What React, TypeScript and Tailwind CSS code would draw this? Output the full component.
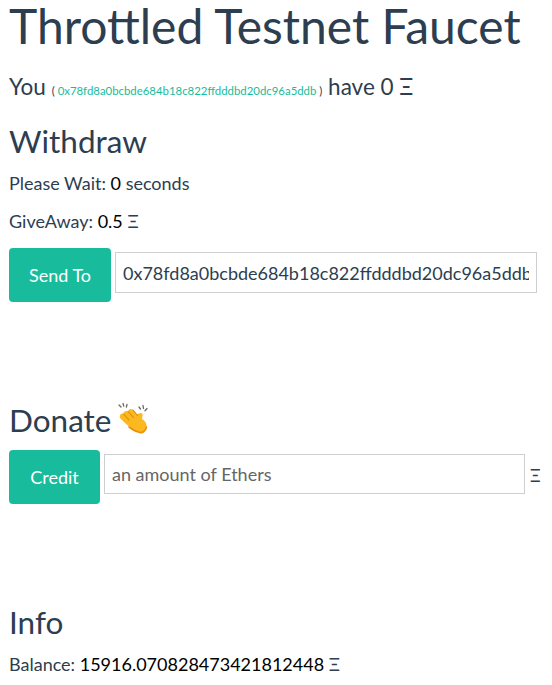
const ether = "\u039E";

function Clap() {
  return (
    <svg viewBox="0 0 36 36" className="h-[36px] w-[36px] shrink-0">
      <g stroke="#6f6a5c" strokeWidth="1.3" strokeLinecap="round">
        <path d="M3 3 L5 5" />
        <path d="M7 1.5 L7.8 4.2" />
        <path d="M11 2.5 L10.4 5" />
        <path d="M23 5 L24.5 7" />
        <path d="M27 3.5 L27.5 6.5" />
        <path d="M31 6.5 L29 8.8" />
      </g>
      <path
        d="M4 14 C4 12 6 11 7.5 12 C7.5 9.5 10 8 12 9.5 C12.5 7 15 6 17 8 L21 12.5 C22.5 11 25 10 26.5 12 C27 13.5 26 15 26 17 C28.5 18.5 31 21 30.5 25 C30 29 26 32 22.5 30 C17 28 11 23 8 20 L5 17 C3.5 16 3.5 15 4 14 Z"
        fill="#fbb91f"
      />
      <path
        d="M7.5 12 L13 18 M12 9.5 L17.5 15.5 M17 8 L21.5 13.5"
        stroke="#d98a10"
        strokeWidth="1.1"
        strokeLinecap="round"
        fill="none"
      />
      <path d="M13 25 C17 28 20 29.5 22.5 30 C26 32 30 29 30.5 25" stroke="#e8920c" strokeWidth="1.6" fill="none" strokeLinecap="round" />
    </svg>
  );
}

export default function App() {
  return (
    <div className="h-[685px] bg-white px-[9px] font-['Lato','Liberation_Sans',sans-serif] text-[#2c3e50]">
      {/* Header */}
      <h1 className="text-[48px] font-normal leading-[52px]">Throttled Testnet Faucet</h1>
      <p className="mt-[17px] text-[22.5px] leading-[36px] whitespace-nowrap">
        You{" "}
        <span className="text-[11.4px]">
          ( <a className="text-[#18bc9c]">0x78fd8a0bcbde684b18c822ffdddbd20dc96a5ddb</a> )
        </span>{" "}
        have 0 {ether}
      </p>

      {/* Withdraw */}
      <h2 className="mt-[14px] text-[31.5px] font-normal leading-[36px]">Withdraw</h2>
      <p className="mt-[12px] text-[18px] leading-[25px]">
        Please Wait: <span className="text-black">0</span> seconds
      </p>
      <p className="mt-[13px] text-[18px] leading-[25px]">
        GiveAway: <span className="text-black">0.5</span> {ether}
      </p>
      <div className="mt-[14px] flex items-start gap-[4px]">
        <button className="h-[54px] w-[102px] shrink-0 rounded-[4px] bg-[#18bc9c] text-[18px] text-white">
          Send To
        </button>
        <input
          readOnly
          value="0x78fd8a0bcbde684b18c822ffdddbd20dc96a5ddb"
          className="mt-[4px] h-[41px] w-[422px] border border-[#cfcfcf] px-[7px] text-[18px] text-[#2c3e50] outline-none"
        />
      </div>

      {/* Donate */}
      <h2 className="mt-[100px] flex items-center gap-[5px] text-[31.5px] font-normal leading-[36px]">
        Donate
        <Clap />
      </h2>
      <div className="mt-[12px] flex items-start gap-[4px]">
        <button className="h-[54px] w-[91px] shrink-0 rounded-[4px] bg-[#18bc9c] text-[18px] text-white">
          Credit
        </button>
        <input
          placeholder="an amount of Ethers"
          className="mt-[4px] h-[40px] w-[421px] border border-[#cfcfcf] px-[7px] text-[18px] outline-none placeholder:text-[#666666]"
        />
        <span className="ml-[1px] mt-[13px] text-[17px] leading-[25px]">{ether}</span>
      </div>

      {/* Info */}
      <h2 className="mt-[100px] text-[31.5px] font-normal leading-[36px]">Info</h2>
      <p className="mt-[12px] text-[18px] leading-[25px]">
        Balance: <span className="text-black">15916.070828473421812448</span> {ether}
      </p>
    </div>
  );
}
